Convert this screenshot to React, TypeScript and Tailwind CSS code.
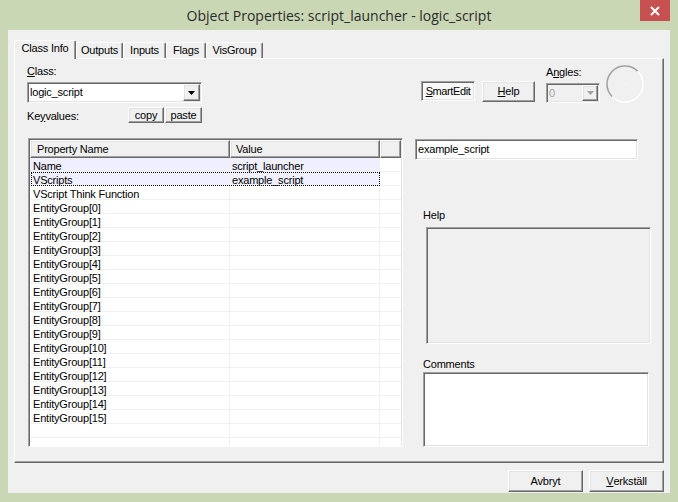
import React from "react";

const sunken =
  "border border-t-[#a0a0a0] border-l-[#a0a0a0] border-b-white border-r-white shadow-[inset_1px_1px_0_#696969,inset_-1px_-1px_0_#e3e3e3]";
const raised =
  "border border-t-white border-l-white border-b-[#696969] border-r-[#696969] shadow-[inset_-1px_-1px_0_#a0a0a0,inset_1px_1px_0_#e3e3e3] bg-[#f0f0f0]";

const names = [
  "Name",
  "VScripts",
  "VScript Think Function",
  ...Array.from({ length: 16 }, (_, i) => `EntityGroup[${i}]`),
];
const values = ["script_launcher", "example_script"];

function Arrow({ color = "#000" }: { color?: string }) {
  return (
    <svg width="7" height="4" viewBox="0 0 7 4">
      <polygon points="0,0 7,0 3.5,4" fill={color} />
    </svg>
  );
}

function Row({ name, value, idx }: { name: string; value: string; idx: number }) {
  const hl = idx === 0 || idx === 1;
  const focus = idx === 1;
  return (
    <div className="flex h-[14px] shrink-0">
      <div className={`relative flex w-[350px] ${hl ? "bg-[#efeffd]" : "bg-white"}`}>
        <div className="w-[200px] h-[14px] border-r border-b border-[#f0f0f0] pl-[3px] pt-[1px] leading-[14px] whitespace-nowrap">
          {name}
        </div>
        <div className="w-[150px] h-[14px] border-r border-b border-[#f0f0f0] pl-[2px] pt-[1px] leading-[14px] whitespace-nowrap">
          {value}
        </div>
        {focus && (
          <span className="absolute inset-0 left-[1px] border border-dotted border-black pointer-events-none" />
        )}
      </div>
      <div className="flex-1 h-[14px] border-b border-[#f0f0f0] bg-white" />
    </div>
  );
}

function Tab({
  label,
  w,
  selected,
}: {
  label: string;
  w: string;
  selected?: boolean;
}) {
  if (selected) {
    return (
      <div
        className={`${w} h-[19px] -mb-[1px] bg-[#f0f0f0] border-l border-t border-r border-l-white border-t-white border-r-[#696969] rounded-t-[2px] shadow-[inset_-1px_0_0_#a0a0a0] flex justify-center leading-[14px] relative z-10`}
      >
        {label}
      </div>
    );
  }
  return (
    <div
      className={`${w} h-[16px] bg-[#f0f0f0] border-l border-t border-r border-l-white border-t-white border-r-[#696969] rounded-t-[2px] shadow-[inset_-1px_0_0_#a0a0a0] flex justify-center leading-[14px]`}
    >
      {label}
    </div>
  );
}

export default function App() {
  return (
    <div className="w-[678px] h-[502px] bg-[#cad7b5] flex flex-col overflow-hidden font-['Liberation_Sans',Arial,sans-serif] text-[11px] tracking-[-0.2px] text-black">
      {/* Title bar */}
      <div className="h-[30px] flex items-start shrink-0">
        <div className="w-[38px]" />
        <div className="flex-1 text-center pt-[7px] leading-[18px] text-[14px] tracking-normal text-[#2b2b2b] font-['Open_Sans',sans-serif]">
          Object Properties: script_launcher - logic_script
        </div>
        <div className="w-[38px] flex">
          <div className="w-[30px] h-[21px] bg-[#c75050] flex items-center justify-center">
            <svg width="10" height="10" viewBox="0 0 10 10">
              <path d="M1 1 L9 9 M9 1 L1 9" stroke="#fff" strokeWidth="2" />
            </svg>
          </div>
        </div>
      </div>

      {/* Client area */}
      <div className="ml-[8px] w-[662px] h-[463px] bg-[#f0f0f0] flex flex-col shrink-0">
        {/* Tabs */}
        <div className="flex items-end h-[18px] ml-[6px] mt-[10px] relative z-10">
          <Tab label="Class Info" w="w-[62px]" selected />
          <Tab label="Outputs" w="w-[47px]" />
          <Tab label="Inputs" w="w-[43px]" />
          <Tab label="Flags" w="w-[40px]" />
          <Tab label="VisGroup" w="w-[57px]" />
        </div>

        {/* Panel */}
        <div className="ml-[6px] w-[650px] h-[405px] border border-t-white border-l-white border-r-[#696969] border-b-[#696969] shadow-[inset_-1px_-1px_0_#a0a0a0] flex">
          {/* Left column */}
          <div className="ml-[12px] flex flex-col">
            <div className="mt-[6px] h-[13px] leading-[13px]">
              <span className="underline">C</span>lass:
            </div>
            <div className={`mt-[4px] w-[175px] h-[21px] bg-white ${sunken} flex items-center`}>
              <div className="flex-1 pl-[2px] leading-[13px]">logic_script</div>
              <div className={`w-[17px] h-[17px] mr-[1px] ${raised} flex items-center justify-center`}>
                <Arrow />
              </div>
            </div>
            <div className="mt-[4px] h-[16px] flex items-end">
              <div className="w-[101px] leading-[13px]">
                Ke<span className="underline">y</span>values:
              </div>
              <div className={`w-[36px] h-[16px] ${raised} flex items-center justify-center leading-[12px]`}>
                copy
              </div>
              <div className={`ml-[1px] w-[37px] h-[16px] ${raised} flex items-center justify-center leading-[12px]`}>
                paste
              </div>
            </div>

            {/* List */}
            <div className={`mt-[15px] ml-[1px] w-[375px] h-[309px] bg-white ${sunken} p-[1px] overflow-hidden flex flex-col`}>
              <div className="flex h-[18px] shrink-0">
                <div className={`w-[200px] h-[18px] ${raised} pl-[6px] leading-[16px]`}>Property Name</div>
                <div className={`w-[150px] h-[18px] ${raised} pl-[5px] leading-[16px]`}>Value</div>
                <div className={`flex-1 h-[18px] ${raised}`} />
              </div>
              {names.map((n, i) => (
                <Row key={n} name={n} value={values[i] ?? ""} idx={i} />
              ))}
              <Row name="" value="" idx={-1} />
              <Row name="" value="" idx={-2} />
            </div>
          </div>

          {/* Right column */}
          <div className="ml-[12px] flex flex-col">
            <div className="mt-[6px] h-[38px] flex items-start">
              <div className={`ml-[6px] mt-[16px] w-[54px] h-[20px] bg-[#f8f8f8] ${sunken} flex items-center justify-center leading-[13px] tracking-[-0.4px]`}>
                <span className="underline">S</span>martEdit
              </div>
              <div className={`ml-[7px] mt-[16px] w-[53px] h-[21px] ${raised} flex items-center justify-center leading-[13px]`}>
                <span className="underline">H</span>elp
              </div>
              <div className="ml-[11px] mt-[1px] w-[54px] flex flex-col">
                <div className="h-[13px] leading-[13px]">
                  A<span className="underline">n</span>gles:
                </div>
                <div className={`mt-[4px] h-[20px] bg-[#f0f0f0] ${sunken} flex items-center`}>
                  <div className="flex-1 pl-[2px] leading-[13px] text-[#a0a0a0]">0</div>
                  <div className={`w-[16px] h-[16px] mr-[1px] ${raised} flex items-center justify-center`}>
                    <Arrow color="#a0a0a0" />
                  </div>
                </div>
              </div>
              <div className="ml-[6px] w-[38px] h-[38px]">
                <svg width="38" height="38" viewBox="0 0 38 38">
                  <path d="M6.27 31.73 A18 18 0 0 1 31.73 6.27" fill="none" stroke="#a0a0a0" strokeWidth="1.5" />
                  <path d="M31.73 6.27 A18 18 0 0 1 6.27 31.73" fill="none" stroke="#ffffff" strokeWidth="1.5" />
                  <rect x="19" y="19" width="1" height="1" fill="#ffffff" />
                </svg>
              </div>
            </div>

            <div className={`mt-[36px] w-[223px] h-[21px] bg-white ${sunken} flex items-center pl-[2px] leading-[13px]`}>
              example_script
            </div>

            <div className="mt-[49px] ml-[8px] h-[13px] leading-[13px]">Help</div>
            <div className={`mt-[5px] ml-[11px] w-[225px] h-[117px] bg-[#f0f0f0] ${sunken}`} />

            <div className="mt-[14px] ml-[8px] h-[13px] leading-[13px]">Comments</div>
            <div className={`mt-[1px] ml-[8px] w-[226px] h-[75px] bg-white ${sunken}`} />
          </div>
        </div>

        {/* Bottom buttons */}
        <div className="mt-[7px] flex justify-end pr-[6px] gap-[6px]">
          <div className={`w-[75px] h-[22px] ${raised} flex items-center justify-center leading-[13px]`}>
            Avbryt
          </div>
          <div className={`w-[75px] h-[22px] ${raised} flex items-center justify-center leading-[13px]`}>
            <span className="underline">V</span>erkställ
          </div>
        </div>
      </div>
    </div>
  );
}
